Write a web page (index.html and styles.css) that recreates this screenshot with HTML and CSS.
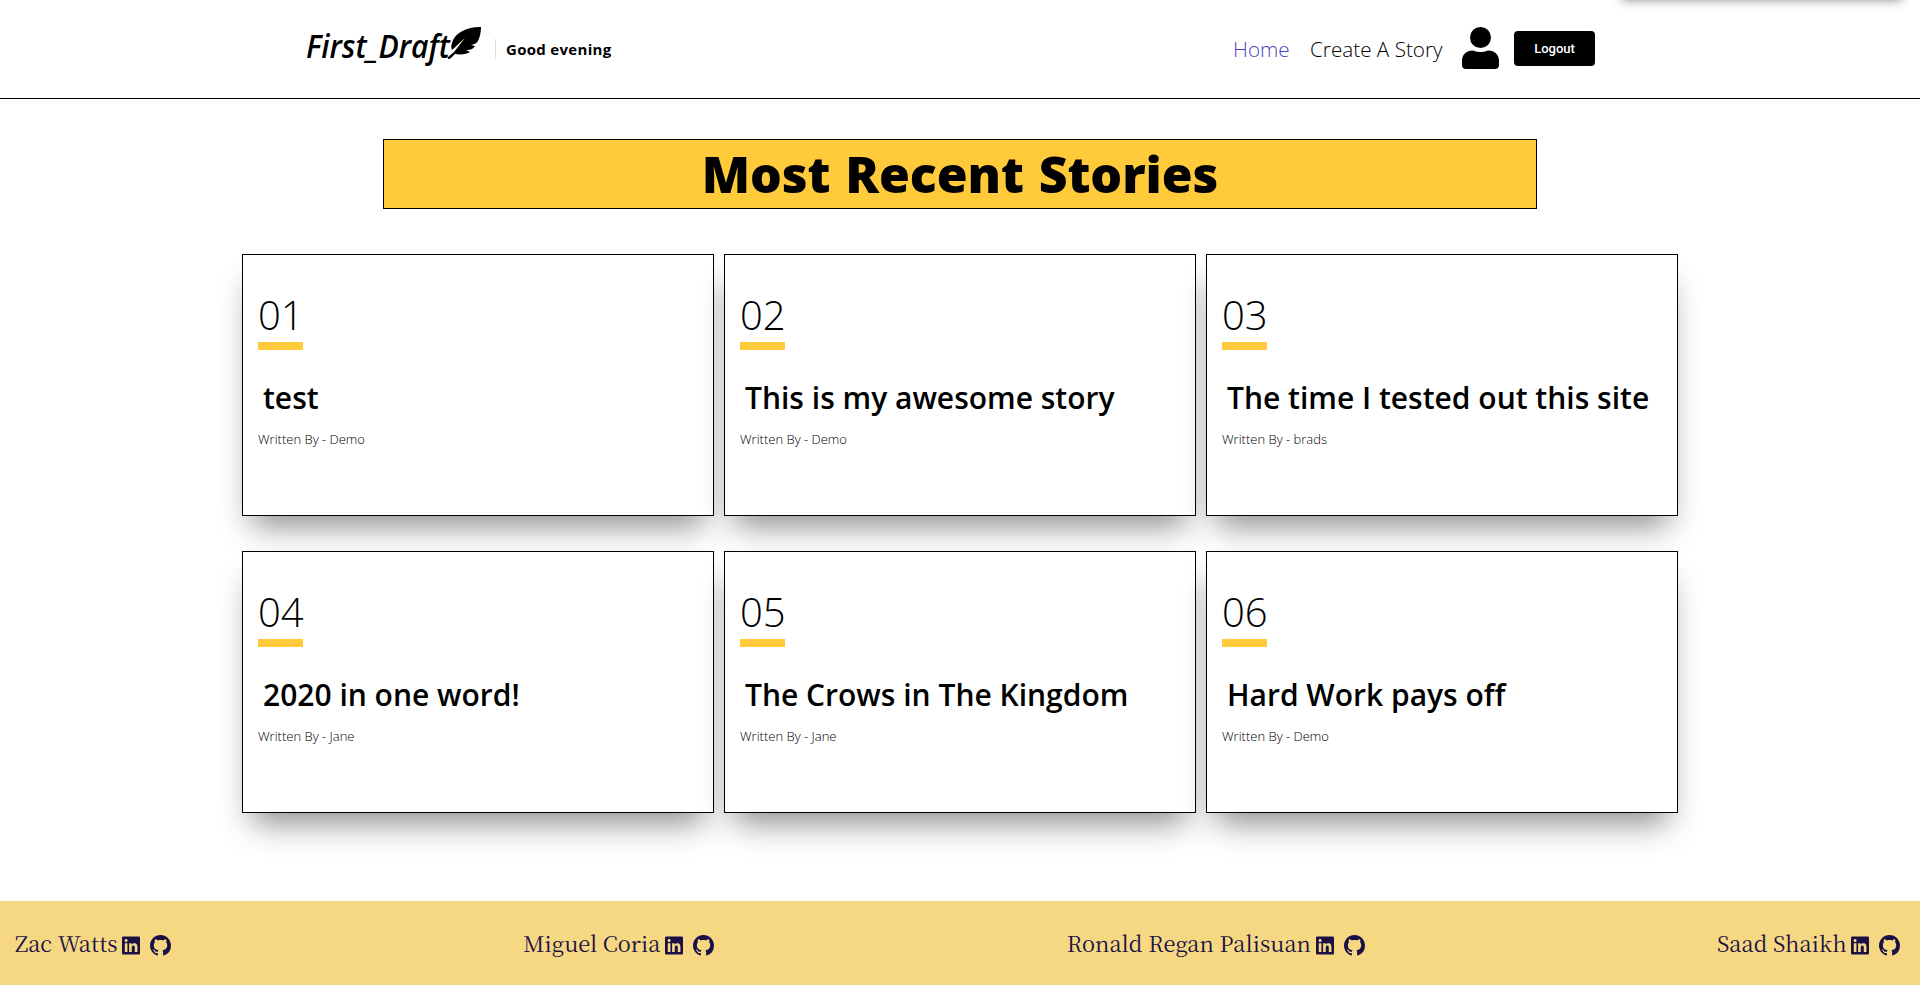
FILE: index.html
```html
<!DOCTYPE html>
<html lang="en">
<head>
<meta charset="utf-8">
<title>First Draft</title>
<link rel="stylesheet" href="styles.css">
</head>
<body>
<svg class="sprite" aria-hidden="true">
  <symbol id="linkedin" viewBox="0 0 448 512"><path d="M416 32H31.900C14.300 32 0 46.500 0 64.300v383.400C0 465.500 14.300 480 31.900 480H416c17.600 0 32-14.500 32-32.300V64.300c0-17.800-14.400-32.300-32-32.300zM135.400 416H69V202.200h66.500V416zm-33.200-243c-21.300 0-38.500-17.300-38.500-38.500S80.900 96 102.200 96c21.200 0 38.500 17.300 38.500 38.500 0 21.300-17.200 38.500-38.500 38.500zm282.100 243h-66.400V312c0-24.800-.5-56.700-34.500-56.700-34.600 0-39.900 27-39.900 54.900V416h-66.400V202.200h63.700v29.200h.9c8.900-16.800 30.600-34.500 62.900-34.500 67.200 0 79.700 44.300 79.700 101.900V416z"/></symbol>
  <symbol id="github" viewBox="0 0 16 16"><path d="M8 0C3.580 0 0 3.580 0 8c0 3.540 2.290 6.530 5.470 7.590.4.070.55-.17.55-.38 0-.19-.01-.82-.01-1.490-2.010.37-2.530-.49-2.690-.94-.09-.23-.48-.94-.82-1.130-.28-.15-.68-.52-.01-.53.63-.01 1.080.58 1.230.82.72 1.210 1.870.87 2.330.66.07-.52.28-.87.51-1.070-1.780-.2-3.640-.89-3.640-3.950 0-.87.31-1.590.82-2.150-.08-.2-.36-1.020.08-2.120 0 0 .67-.21 2.200.82.64-.18 1.320-.27 2-.27s1.360.09 2 .27c1.530-1.040 2.200-.82 2.200-.82.44 1.100.16 1.920.08 2.120.51.56.82 1.270.82 2.150 0 3.070-1.870 3.750-3.650 3.950.29.25.54.73.54 1.480 0 1.070-.01 1.930-.01 2.200 0 .21.15.46.55.38A8.010 8.010 0 0 0 16 8c0-4.420-3.580-8-8-8z"/></symbol>
</svg>
<div class="menu"></div>
<header class="header">
  <div class="brand">
    <svg class="logo" viewBox="0 0 176 50">
      <text class="logo-text" x="1" y="36" textLength="144" lengthAdjust="spacingAndGlyphs">First_Draft</text>
      <path d="M175 5C160 5 149 12 147 21c-1 3-1 4 0 7l13-12-11 14-6 5c-1 2 1 3 3 1l4-4c6 1 12 0 15-2l-4-2c5 0 7-1 9-4l-4-1c4-1 6-2 7-4 2-4 3-9 3-14z"/>
    </svg>
    <div class="greeting">Good evening</div>
  </div>
  <nav class="nav">
    <a class="link active">Home</a>
    <a class="link create">Create A Story</a>
    <svg class="user" viewBox="0 0 37 42"><circle cx="18.500" cy="10.500" r="10.500"/><path d="M11 23.500c5 2 10 2 15 0 7 0 11 4.500 11 10.500v4c0 2.500-1.500 4-4 4H4c-2.500 0-4-1.500-4-4v-4c0-6 4-10.500 11-10.500z"/></svg>
    <button class="logout">Logout</button>
  </nav>
</header>
<main class="main">
  <h1 class="banner">Most Recent Stories</h1>
  <section class="grid">
    <article class="card"><div class="num">01</div><h2 class="title">test</h2><p class="by">Written By - Demo</p></article>
    <article class="card"><div class="num">02</div><h2 class="title">This is my awesome story</h2><p class="by">Written By - Demo</p></article>
    <article class="card"><div class="num">03</div><h2 class="title">The time I tested out this site</h2><p class="by">Written By - brads</p></article>
    <article class="card"><div class="num">04</div><h2 class="title">2020 in one word!</h2><p class="by">Written By - Jane</p></article>
    <article class="card"><div class="num">05</div><h2 class="title">The Crows in The Kingdom</h2><p class="by">Written By - Jane</p></article>
    <article class="card"><div class="num">06</div><h2 class="title">Hard Work pays off</h2><p class="by">Written By - Demo</p></article>
  </section>
</main>
<footer class="footer">
  <div class="person"><span class="name zac">Zac Watts</span><svg class="li"><use href="#linkedin"/></svg><svg class="gh"><use href="#github"/></svg></div>
  <div class="person"><span class="name miguel">Miguel Coria</span><svg class="li"><use href="#linkedin"/></svg><svg class="gh"><use href="#github"/></svg></div>
  <div class="person"><span class="name ronald">Ronald Regan Palisuan</span><svg class="li"><use href="#linkedin"/></svg><svg class="gh"><use href="#github"/></svg></div>
  <div class="person"><span class="name saad">Saad Shaikh</span><svg class="li"><use href="#linkedin"/></svg><svg class="gh"><use href="#github"/></svg></div>
</footer>
</body>
</html>
```
FILE: styles.css
```css
* { box-sizing: border-box; }
body { margin: 0; height: 985px; overflow: hidden; display: flex; flex-direction: column; background: #fff; color: #000; font-family: "Open Sans", sans-serif; position: relative; }
h1, h2, p { margin: 0; }
.sprite { display: none; }
/* closed menu parked above the page; only its shadow shows */
.menu { position: absolute; top: -53px; left: 1622px; width: 280px; height: 50px; box-shadow: 0 3px 10px rgba(0,0,0,.45); }
.header { height: 99px; flex: none; border-bottom: 1px solid #000; display: flex; justify-content: space-between; padding: 0 325px 0 305px; }
.brand { display: flex; }
.logo { width: 176px; height: 50px; margin-top: 22px; overflow: visible; }
.logo-text { font: italic 600 33px "Open Sans", cursive; }
.greeting { margin: 39px 0 0 14px; height: 20px; border-left: 1px solid #ddd; padding-left: 10px; font-weight: 700; font-size: 15px; line-height: 21px; letter-spacing: .3px; white-space: nowrap; }
.nav { display: flex; }
.link { font-weight: 300; font-size: 20.7px; line-height: 28px; margin-top: 35px; white-space: nowrap; width: 77px; }
.active { color: #4a3fc4; }
.create { width: 152px; }
.user { width: 37px; height: 42px; margin: 27px 15px 0 0; }
.logout { width: 81px; height: 35px; margin-top: 31px; padding: 0; border: 0; border-radius: 4px; background: #000; color: #fff; font: 500 13px/35px Roboto, sans-serif; }
.main { flex: 1; padding-top: 40px; }
.banner { width: 1154px; height: 70px; margin: 0 auto 45px; border: 1px solid #000; background: #ffcb3b; text-align: center; font-size: 50px; font-weight: 800; line-height: 68px; letter-spacing: -.1px; word-spacing: 2px; }
.grid { display: grid; grid-template-columns: repeat(3, 472px); gap: 35px 10px; justify-content: center; }
.card { height: 262px; border: 1px solid #000; padding: 32px 15px 0; background: #fff; box-shadow: 0 20px 30px -10px rgba(0,0,0,.45); }
.num { width: 45px; height: 63px; border-bottom: 8px solid #ffcb3b; font-size: 40px; font-weight: 300; line-height: 56px; }
.title { margin: 28px 0 0 5px; font-size: 30px; font-weight: 600; line-height: 40px; white-space: nowrap; }
.by { margin-top: 12px; font-size: 13px; font-weight: 300; line-height: 18px; }
.footer { height: 84px; flex: none; background: #f6d882; display: flex; justify-content: space-between; padding: 0 20px 0 15px; color: #1a1045; font-family: "Source Serif Pro", "Noto Serif CJK SC", "Liberation Serif", serif; font-size: 21.8px; }
.person { display: flex; }
.name { line-height: 30px; margin-top: 27px; white-space: nowrap; }
.zac { width: 107px; }
.miguel { width: 142px; }
.ronald { width: 249px; }
.saad { width: 134px; }
.li { width: 18px; height: 21px; margin: 34px 10px 0 0; fill: currentColor; }
.gh { width: 21px; height: 21px; margin-top: 34px; fill: currentColor; }
```
